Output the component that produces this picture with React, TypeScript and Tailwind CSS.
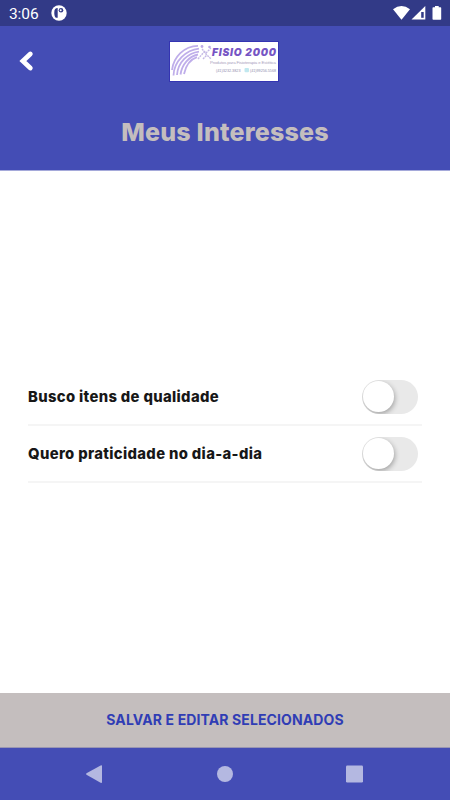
import React from "react";

const interests = [
  { label: "Busco itens de qualidade", spacing: "tracking-[0.35px]" },
  { label: "Quero praticidade no dia-a-dia", spacing: "tracking-[0.35px]" },
];

function StatusBar() {
  return (
    <div className="flex h-[26px] shrink-0 items-center bg-[#323a87] pl-[9px] pr-[7px] text-white">
      <span className="w-[30px] font-[Roboto,sans-serif] text-[15.5px] leading-[26px] tracking-[-0.1px] translate-y-px">3:06</span>
      <svg className="ml-[12px]" width="16" height="16" viewBox="0 0 16 16">
        <circle cx="8" cy="8" r="7.7" fill="white" />
        <path d="M3.3 7 Q3.3 3 6.7 3 V12.8 H5.2 Q3.7 12.6 3.3 9 Z" fill="#323a87" />
        <circle cx="10" cy="5.3" r="2.3" fill="#323a87" />
        <circle cx="9.7" cy="5.2" r="1" fill="white" />
      </svg>
      <svg className="ml-auto" width="50" height="16" viewBox="393 5 50 16">
        <path d="M393 9.2 Q401.5 2.8 410 9.2 L401.5 19.8 Z" fill="white" />
        <path d="M425.3 6 V19.5 H411.5 Z" fill="white" />
        <path d="M421.2 12 H423.7 V17.8 H421.2 Z" fill="#323a87" />
        <path d="M435 6 H438.7 V7.3 H440.5 Q441.2 7.3 441.2 8 V19 Q441.2 19.8 440.5 19.8 H433.3 Q432.5 19.8 432.5 19 V8 Q432.5 7.3 433.3 7.3 H435 Z" fill="white" />
      </svg>
    </div>
  );
}

function Logo() {
  return (
    <svg className="overflow-visible" width="110" height="41" viewBox="0 0 110 41">
      <rect width="110" height="41" fill="#3434b2" />
      <rect x="1" y="1" width="108" height="39" fill="white" />
      <g fill="none" stroke="#bfaeea" strokeWidth="1.8">
        <path d="M3 29 C4.5 16 15 5 29 4.8" />
        <path d="M4.5 34.5 C5 20 17 9 30 7.6" />
        <path d="M8 34 C9 21 19 12 30 10.6" />
        <path d="M11.5 33.5 C13 23 20 15.5 29 13.5" />
        <path d="M15 33 C17 24 21 18.5 28 16.2" />
      </g>
      <g fill="none" stroke="#c5b9e5" strokeWidth="1.4" strokeDasharray="2 0.8">
        <path d="M29 18 L35 11 L42 18" />
        <path d="M33 8 L37 12 L42 7" />
        <path d="M34 18 L38 14" />
      </g>
      <circle cx="33" cy="5.5" r="1.4" fill="#bcaae6" />
      <circle cx="40.5" cy="6" r="1.3" fill="#bcaae6" />
      <text x="43" y="15.3" textLength="64" lengthAdjust="spacing" fontFamily="Inter, sans-serif" fontSize="10.2" fontWeight="900" fontStyle="italic" fill="#7654c4">FISIO 2000</text>
      <text x="41" y="23.2" textLength="66" lengthAdjust="spacing" fontFamily="Liberation Sans, sans-serif" fontSize="4.4" fill="#aaa2bd">Produtos para Fisioterapia e Estética</text>
      <text x="47" y="31" textLength="24.5" lengthAdjust="spacingAndGlyphs" fontFamily="Liberation Sans, sans-serif" fontSize="4.3" fill="#8f8cad">(41)3232.3823</text>
      <rect x="75.5" y="27" width="4.5" height="4.3" rx="1" fill="#c1e8ef" />
      <text x="81" y="31" textLength="26" lengthAdjust="spacingAndGlyphs" fontFamily="Liberation Sans, sans-serif" fontSize="4.3" fill="#8f8cad">(41)99256.5568</text>
    </svg>
  );
}

function Toggle() {
  return (
    <button type="button" role="switch" aria-checked="false" aria-label="Selecionar" className="flex h-[34px] w-[56px] shrink-0 items-center overflow-hidden rounded-full bg-[#e9e9e9] pl-px">
      <span className="size-[31px] rounded-full bg-white shadow-[1px_2px_5px_rgba(0,0,0,0.3)]" />
    </button>
  );
}

export default function App() {
  return (
    <div className="flex h-[800px] w-[450px] flex-col overflow-hidden bg-white font-[Inter,sans-serif]">
      <StatusBar />
      <header className="h-[145px] shrink-0 border-b border-[#a5a9da] bg-[#444db5]">
        <div className="grid h-[70px] grid-cols-[169px_110px_1fr] items-center">
          <button type="button" aria-label="Voltar" className="ml-[18px] w-fit">
            <svg width="18" height="22" viewBox="0 0 18 22">
              <path d="M12.3 4 L4.9 11 L12.3 18" fill="none" stroke="white" strokeWidth="4.8" strokeLinecap="round" />
            </svg>
          </button>
          <Logo />
        </div>
        <h1 className="mt-[20px] text-center text-[25px] leading-[32px] font-extrabold tracking-[0.2px] text-[#c4bebe]">Meus Interesses</h1>
      </header>
      <main className="flex-1 px-7 pt-[198px]">
        {interests.map((item) => (
          <div key={item.label} className="flex h-[57px] items-center justify-between border-b-2 border-[#f5f5f5] pr-[4px]">
            <span className={`text-[14.8px] leading-5 font-extrabold text-[#171717] ${item.spacing}`}>{item.label}</span>
            <Toggle />
          </div>
        ))}
      </main>
      <button type="button" className="h-[55px] shrink-0 border-b border-[#9996b2] bg-[#c4bebe] pb-px text-[14px] font-bold tracking-[0.11px] text-[#303db5]">
        SALVAR E EDITAR SELECIONADOS
      </button>
      <nav className="flex h-[52px] shrink-0 items-center bg-[#444db5]">
        <svg width="450" height="52" viewBox="0 0 450 52" fill="#b4b8e1">
          <path d="M86.5 25.2 Q85.5 26 86.5 26.7 L100.6 34.7 Q102 35.3 102 34 V18 Q102 16.8 100.6 17.4 Z" />
          <circle cx="225" cy="26" r="8" />
          <rect x="346" y="17.5" width="17" height="17" rx="1.2" />
        </svg>
      </nav>
    </div>
  );
}
